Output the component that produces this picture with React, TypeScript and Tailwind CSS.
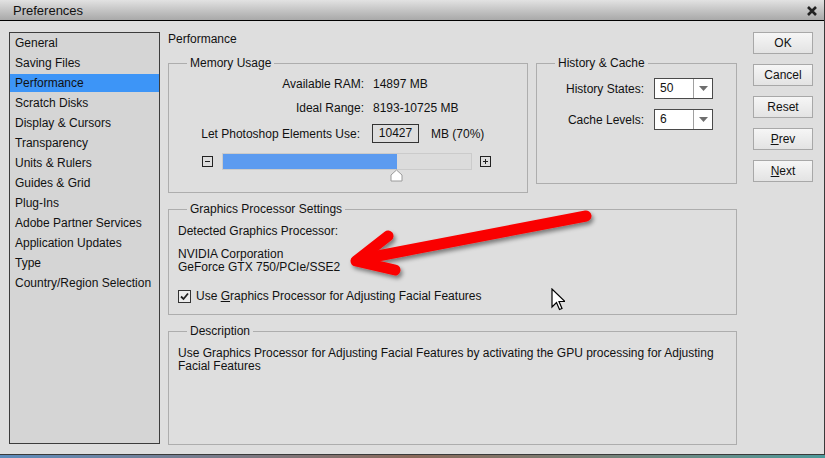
import React from 'react'

const SECTIONS = [
  'General',
  'Saving Files',
  'Performance',
  'Scratch Disks',
  'Display & Cursors',
  'Transparency',
  'Units & Rulers',
  'Guides & Grid',
  'Plug-Ins',
  'Adobe Partner Services',
  'Application Updates',
  'Type',
  'Country/Region Selection',
]

function GroupBox({ title, className, children }: { title: string; className: string; children: React.ReactNode }) {
  return (
    <fieldset className={`border border-[#adadad] ${className}`}>
      <legend className="ml-[18px] px-[3px] leading-[14px]">{title}</legend>
      {children}
    </fieldset>
  )
}

function Select({ value }: { value: string }) {
  return (
    <div className="flex w-[59px] h-[21px] border border-[#4a4a4a] bg-white">
      <span className="flex-1 pl-[5px] leading-[19px]">{value}</span>
      <span className="w-[19px] border-l border-[#a0a0a0] flex items-center justify-center">
        <svg width="9" height="5" viewBox="0 0 9 5">
          <path d="M0 0h9L4.5 5z" fill="#6e6e6e" />
        </svg>
      </span>
    </div>
  )
}

function DialogButton({ children }: { children: React.ReactNode }) {
  return (
    <button className="w-[60px] h-[22px] border border-[#a8a8a8] bg-gradient-to-b from-[#f6f6f6] to-[#e3e3e3] text-center leading-[20px]">
      {children}
    </button>
  )
}

function SmallBox({ plus }: { plus?: boolean }) {
  return (
    <svg width="11" height="11" viewBox="0 0 11 11" className="shrink-0">
      <rect x="0.5" y="0.5" width="10" height="10" fill="none" stroke="#222" />
      <path d="M3 5.5h5" stroke="#222" />
      {plus && <path d="M5.5 3v5" stroke="#222" />}
    </svg>
  )
}

export default function App() {
  return (
    <div className="relative w-[825px] h-[458px] overflow-hidden bg-gradient-to-r from-[#5c8cbc] via-[#8a6a5a] to-[#4c9a9a] font-['Liberation_Sans',Arial,sans-serif] text-[12px] leading-[14px] text-[#111]">
      <div className="h-[455px] bg-[#dedede] border-r border-b border-[#3a3a3a] flex flex-col">
        {/* title bar */}
        <div className="h-[21px] shrink-0 flex items-center justify-between pl-[13px] pr-[6px] pt-[1px] bg-gradient-to-b from-[#e2e2e2] to-[#a9a9a9] border-b border-black">
          <span className="text-[13px]">Preferences</span>
          <svg width="12" height="12" viewBox="0 0 12 12">
            <path d="M2 2l8 8M10 2l-8 8" stroke="#222" strokeWidth="2.6" />
          </svg>
        </div>

        <div className="flex flex-1">
          {/* section list */}
          <div className="ml-[9px] mt-[11px] w-[151px] h-[412px] pt-[1px] border border-[#3c3c3c] bg-[#d5d5d5]">
            {SECTIONS.map((s) => (
              <div
                key={s}
                className={`h-[18px] mb-[2px] pl-[5px] leading-[18px] ${s === 'Performance' ? 'bg-[#3d95f7]' : ''}`}
              >
                {s}
              </div>
            ))}
          </div>

          {/* main column */}
          <div className="ml-[8px] pt-[11px] w-[569px] flex flex-col">
            <div className="h-[14px]">Performance</div>

            <div className="flex mt-[10px] gap-[8px] items-start">
              <GroupBox title="Memory Usage" className="w-[360px] h-[137px]">
                <div className="pt-[7px]">
                  <div className="flex h-[14px]">
                    <span className="w-[195px] text-right">Available RAM:</span>
                    <span className="ml-[9px]">14897 MB</span>
                  </div>
                  <div className="flex h-[14px] mt-[10px]">
                    <span className="w-[195px] text-right">Ideal Range:</span>
                    <span className="ml-[9px]">8193-10725 MB</span>
                  </div>
                  <div className="flex items-center h-[19px] mt-[9px]">
                    <span className="w-[191px] text-right">Let Photoshop Elements Use:</span>
                    <span className="ml-[12px] w-[47px] h-[19px] border border-[#333] text-center leading-[17px]">10427</span>
                    <span className="ml-[12px]">MB (70%)</span>
                  </div>
                  <div className="flex items-center mt-[10px] pl-[33px]">
                    <SmallBox />
                    <div className="relative ml-[9px] w-[250px] h-[17px] border border-[#cbcbcb] bg-[#dcdcdc]">
                      <div className="h-full w-[174px] bg-[#5c9bf0]" />
                      <svg width="13" height="13" viewBox="0 0 13 13" className="absolute left-[167px] top-[15px]">
                        <path d="M1 6L6.5 1 12 6v6H1z" fill="#fff" stroke="#9a9a9a" strokeLinejoin="round" />
                      </svg>
                    </div>
                    <span className="ml-[8px]">
                      <SmallBox plus />
                    </span>
                  </div>
                </div>
              </GroupBox>

              <GroupBox title="History & Cache" className="flex-1 h-[128px]">
                <div className="pt-[8px]">
                  <div className="flex items-center">
                    <span className="w-[107px] text-right">History States:</span>
                    <span className="ml-[10px]">
                      <Select value="50" />
                    </span>
                  </div>
                  <div className="flex items-center mt-[10px]">
                    <span className="w-[107px] text-right">Cache Levels:</span>
                    <span className="ml-[10px]">
                      <Select value="6" />
                    </span>
                  </div>
                </div>
              </GroupBox>
            </div>

            <GroupBox title="Graphics Processor Settings" className="mt-[9px] h-[113px]">
              <div className="pt-[8px] pl-[9px]">
                <div>Detected Graphics Processor:</div>
                <div className="mt-[10px] leading-[13px]">
                  NVIDIA Corporation
                  <br />
                  GeForce GTX 750/PCIe/SSE2
                </div>
                <div className="flex items-center mt-[15px] h-[14px]">
                  <svg width="13" height="13" viewBox="0 0 13 13" className="shrink-0">
                    <rect x="0.5" y="0.5" width="12" height="12" fill="#ececec" stroke="#333" />
                    <path d="M3 6.5l2.5 2.5L10 3.5" fill="none" stroke="#222" strokeWidth="1.8" />
                  </svg>
                  <span className="ml-[5px]">
                    Use <span className="underline">G</span>raphics Processor for Adjusting Facial Features
                  </span>
                </div>
              </div>
            </GroupBox>

            <GroupBox title="Description" className="mt-[9px] h-[121px]">
              <div className="pt-[9px] pl-[9px] leading-[13px]">
                Use Graphics Processor for Adjusting Facial Features by activating the GPU processing for Adjusting
                <br />
                Facial Features
              </div>
            </GroupBox>
          </div>

          {/* buttons */}
          <div className="ml-[16px] mt-[11px] flex flex-col gap-[10px]">
            <DialogButton>OK</DialogButton>
            <DialogButton>Cancel</DialogButton>
            <DialogButton>Reset</DialogButton>
            <DialogButton>
              <span className="underline">P</span>rev
            </DialogButton>
            <DialogButton>
              <span className="underline">N</span>ext
            </DialogButton>
          </div>
        </div>
      </div>

      {/* red annotation arrow */}
      <svg className="absolute inset-0 pointer-events-none" width="825" height="458" viewBox="0 0 825 458">
        <defs>
          <filter id="sh" x="-10%" y="-50%" width="120%" height="200%">
            <feDropShadow dx="2" dy="3" stdDeviation="2" floodColor="#000" floodOpacity="0.45" />
          </filter>
        </defs>
        <g filter="url(#sh)" stroke="#fa0000" strokeWidth="11" strokeLinecap="round" strokeLinejoin="round" fill="none">
          <path d="M586 216L362 259" />
          <path d="M388 236L356 261L395 270" />
        </g>
      </svg>

      {/* mouse pointer */}
      <svg className="absolute left-[551px] top-[288px] pointer-events-none" width="14" height="24" viewBox="0 0 14 24">
        <path d="M1 1v18l4.5-4.5 3 7 2.5-1-3-7H14z" fill="#fff" stroke="#000" strokeWidth="1.2" strokeLinejoin="miter" />
      </svg>
    </div>
  )
}
